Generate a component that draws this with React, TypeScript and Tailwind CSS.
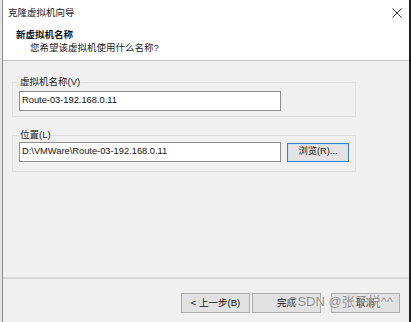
export default function App() {
  const font = "font-['Liberation_Sans','Noto_Sans_CJK_SC',sans-serif]";
  const btn =
    "h-[20px] w-[69px] border border-[#adadad] bg-[#e1e1e1] text-[9.5px] leading-none text-[#111]";

  return (
    <div className={"flex h-[322px] w-[411px] overflow-hidden bg-[#e4e4e4] " + font}>
      <div className="w-[2px] shrink-0" />
      <div className="relative flex min-w-0 flex-1 flex-col border-l border-r-2 border-l-[#8c8c8c] border-r-[#1e1e1e] bg-[#f0f0f0]">
        {/* header */}
        <div className="h-[60px] shrink-0 bg-white">
          <div className="flex items-center justify-between pl-[5px] pr-[7px] pt-[7px]">
            <span className="text-[9.5px] leading-[12px] text-[#1a1a1a]">克隆虚拟机向导</span>
            <svg width="10" height="10" viewBox="0 0 10 10" className="text-[#333]">
              <path d="M0.5 0.5 L9.5 9.5 M9.5 0.5 L0.5 9.5" stroke="currentColor" strokeWidth="1" />
            </svg>
          </div>
          <div className="mt-[10px] pl-[13px] text-[9.5px] font-bold leading-[12px] text-[#111]">
            新虚拟机名称
          </div>
          <div className="mt-px pl-[27px] text-[9.5px] leading-[12px] text-[#222]">
            您希望该虚拟机使用什么名称?
          </div>
        </div>
        <div className="h-px shrink-0 bg-[#c4c4c4]" />

        {/* body */}
        <div className="flex-1 pl-[9px]">
          <fieldset className="mt-[15px] w-[344px] border border-[#e0e0e0] px-[6px] pb-[5px]">
            <legend className="px-px text-[9.5px] leading-[12px] text-[#222]">虚拟机名称(V)</legend>
            <div className="mt-[3px] flex h-[20px] w-[262px] items-center border border-[#8e8e8e] bg-white pl-[2px] text-[9.3px] text-[#111]">
              Route-03-192.168.0.11
            </div>
          </fieldset>

          <fieldset className="mt-[12px] w-[344px] border border-[#e0e0e0] px-[6px] pb-[9px]">
            <legend className="px-px text-[9.5px] leading-[12px] text-[#222]">位置(L)</legend>
            <div className="mt-px flex items-center gap-[6px]">
              <div className="flex h-[20px] w-[262px] items-center border border-[#8e8e8e] bg-white pl-[2px] text-[9.3px] text-[#111]">
                D:\VMWare\Route-03-192.168.0.11
              </div>
              <button className="h-[19px] w-[62px] border border-[#3a7fc4] bg-[#e3e3e3] text-[9.3px] leading-none text-[#222] shadow-[inset_0_0_0_1px_#cfe0f0]">
                浏览(R)...
              </button>
            </div>
          </fieldset>
        </div>

        {/* footer */}
        <div className="h-[2px] shrink-0 bg-[#d6d6d6]" />
        <div className="flex h-[43px] shrink-0 justify-end pr-[9px] pt-[14px]">
          <button className={btn}>&lt; 上一步(B)</button>
          <button className={btn + " ml-[2px]"}>完成</button>
          <button className={btn + " ml-[10px]"}>取消</button>
        </div>

        {/* watermark */}
        <div className="pointer-events-none absolute left-[285px] top-[294px] text-[13px] leading-[16px] text-[#8e8e8e] [text-shadow:0_0_2px_#ffffff]">
          CSDN @张子悦^^
        </div>
      </div>
    </div>
  );
}
